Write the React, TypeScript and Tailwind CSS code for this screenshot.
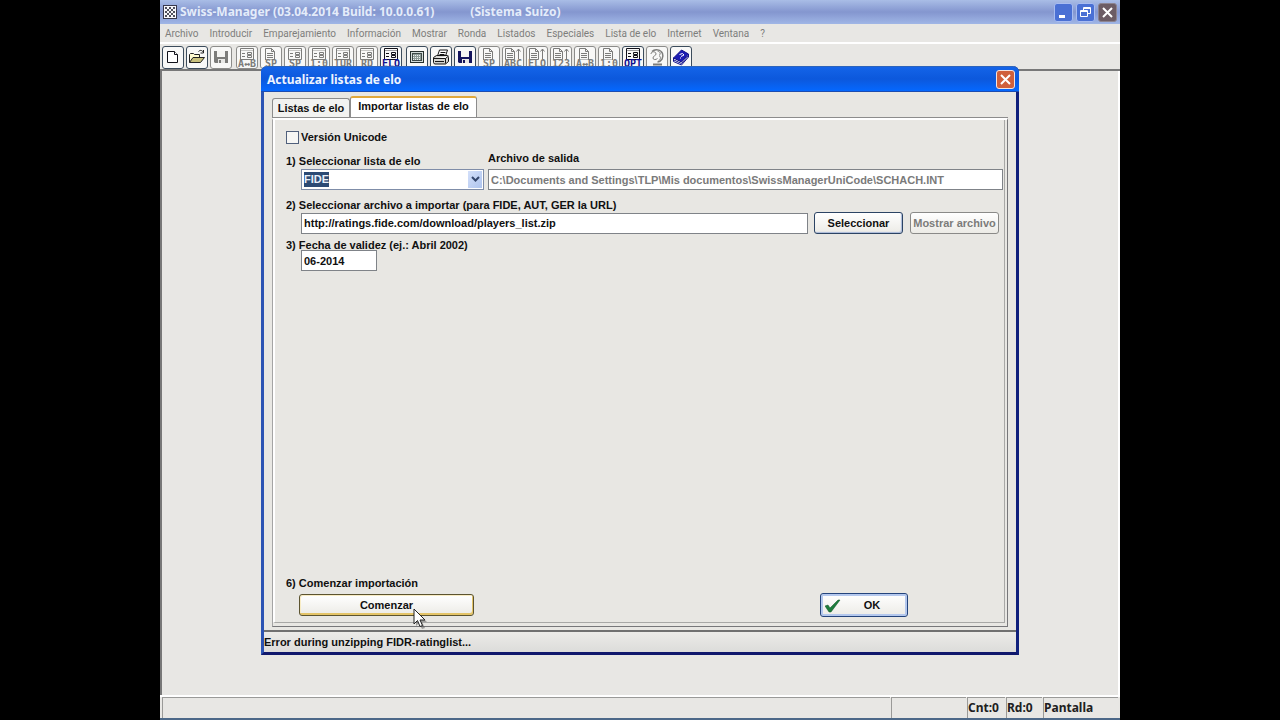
import type { ReactNode } from 'react'

type ToolIcon = 'new' | 'open' | 'save' | 'form' | 'doc' | 'sort' | 'screen' | 'print' | 'world' | 'book'

type Tool = {
  icon: ToolIcon
  name: string
  label?: string
  active?: boolean
}

const menus = [
  'Archivo',
  'Introducir',
  'Emparejamiento',
  'Información',
  'Mostrar',
  'Ronda',
  'Listados',
  'Especiales',
  'Lista de elo',
  'Internet',
  'Ventana',
  '?',
]

const toolGroups: Tool[][] = [
  [
    { icon: 'new', name: 'Nuevo', active: true },
    { icon: 'open', name: 'Abrir', active: true },
    { icon: 'save', name: 'Guardar' },
  ],
  [
    { icon: 'form', name: 'Emparejar', label: 'A↔B' },
    { icon: 'doc', name: 'Nuevo jugador', label: 'SP' },
    { icon: 'form', name: 'Jugadores', label: 'SP' },
    { icon: 'form', name: 'Resultados', label: '1:0' },
    { icon: 'form', name: 'Torneo', label: 'TUR' },
    { icon: 'form', name: 'Rondas', label: 'RD' },
    { icon: 'form', name: 'Elo', label: 'ELO', active: true },
  ],
  [
    { icon: 'screen', name: 'Pantalla', active: true },
    { icon: 'print', name: 'Imprimir', active: true },
    { icon: 'save', name: 'Guardar lista', active: true },
    { icon: 'doc', name: 'Lista de jugadores', label: 'SP' },
    { icon: 'sort', name: 'Orden alfabético', label: 'ABC' },
    { icon: 'sort', name: 'Orden por elo', label: 'ELO' },
    { icon: 'sort', name: 'Clasificación', label: '123' },
    { icon: 'doc', name: 'Lista de emparejamientos', label: 'A↔B' },
    { icon: 'doc', name: 'Lista de resultados', label: '1:0' },
    { icon: 'form', name: 'Opciones', label: 'OPT', active: true },
    { icon: 'world', name: 'Internet' },
    { icon: 'book', name: 'Ayuda', active: true },
  ],
]

const field = 'h-[21px] border border-[#7f8388] bg-white px-[2px] text-[11px] font-bold outline-none'
const xpButton =
  'h-[22px] rounded-[3px] border bg-linear-to-b from-white to-[#ecebe6] text-center font-bold whitespace-nowrap'

function Glyph({ icon }: { icon: ToolIcon }) {
  switch (icon) {
    case 'new':
      return (
        <svg width="18" height="18" viewBox="0 0 18 18" fill="#fff" stroke="currentColor">
          <path d="M3.5 3.5h7l3 3v8h-10z" />
          <path d="M10.5 3.5v3h3" />
        </svg>
      )
    case 'open':
      return (
        <svg width="18" height="18" viewBox="0 0 18 18" fill="none" stroke="#222">
          <path d="M1.5 14.5v-8l1-1h3l1 1h5v3" fill="#fffbd0" />
          <path d="M1.5 14.5l3.5-5h11.500l-4 5z" fill="#c8c07c" />
          <path d="M10.500 3.500c2-2 4-1 5 1M15.500 2v3h-3" />
        </svg>
      )
    case 'save':
      return (
        <svg width="18" height="18" viewBox="0 0 18 18">
          <path d="M2 3h14v12H3l-1-1z" fill="currentColor" />
          <path d="M5 3h8v6H5z" fill="#f4f4f2" />
          <path d="M6 11h7v4H6z" fill="#e8e8e6" />
          <path d="M7 12h2v3H7z" fill="currentColor" />
        </svg>
      )
    case 'form':
      return (
        <svg width="16" height="12" viewBox="0 0 16 12" fill="none" stroke="currentColor">
          <path d="M1.500.500h13v11h-13z" />
          <path d="M2 2.500h12" opacity=".4" />
          <path d="M3 5.500h3M3 8.500h3" />
          <path d="M8.500 4.500h4v2h-4zM8.500 7.500h4v2h-4z" />
        </svg>
      )
    case 'doc':
      return (
        <svg width="16" height="12" viewBox="0 0 16 12" fill="none" stroke="currentColor">
          <path d="M2.500 12V.500h6l3 3V12z" />
          <path d="M8.500.500v3h3M4 5.500h6M4 7.500h6M4 9.500h6" />
        </svg>
      )
    case 'sort':
      return (
        <svg width="16" height="12" viewBox="0 0 16 12" fill="none" stroke="currentColor">
          <path d="M.500 11.500V.500h6l3 3v8z" />
          <path d="M6.500.500v3h3M2 5.500h6M2 7.500h6M2 9.500h6" />
          <path d="M13.500 11V1M11.500 3.500l2-2.500 2 2.500" />
        </svg>
      )
    case 'screen':
      return (
        <svg width="18" height="18" viewBox="0 0 18 18" fill="none" stroke="#26302e">
          <rect x="2.500" y="3.500" width="13" height="11" fill="#d4dcda" />
          <rect x="4.500" y="5.500" width="9" height="7" fill="#8e9c98" stroke="#3e4a48" />
          <path d="M5 7.500h8M5 9.500h8M5 11.500h8" stroke="#eef2f0" strokeDasharray="1 1" />
        </svg>
      )
    case 'print':
      return (
        <svg width="18" height="18" viewBox="0 0 18 18" fill="#fff" stroke="#151515">
          <path d="M5.500 8l2-6h8l-2 6z" />
          <path d="M8.500 4.500h5M7.500 6.500h5" />
          <path d="M1.500 9.500l3-2h11l1 2v4l-3 2.500h-11l-1-1.500z" fill="#d4d4d0" />
          <path d="M1.500 10.500h12l3-2.500M13.500 10.500v5M3 13.500h9" />
        </svg>
      )
    case 'world':
      return (
        <svg width="18" height="18" viewBox="0 0 18 18" fill="none" stroke="currentColor">
          <path d="M4 3.500c3-3 9-2 10.500 2s-1 8-5 8.500" strokeWidth="1.5" />
          <path d="M3 6c0-3 5-3 5 0 0 2-3 1.500-3 4 0 2 3 2 4.500.5M9.500 3c3 1 3.500 3 1.500 4.500 2 1.500 2 3.500-.5 5.500" />
          <path d="M5 16.500h9" strokeWidth="2" />
        </svg>
      )
    case 'book':
      return (
        <svg width="18" height="18" viewBox="0 0 18 18" stroke="#10108c">
          <path d="M1.500 10l8-8 7 4-7 8z" fill="#1c1cb4" />
          <path d="M1.500 10v3.500l8 3.500 7-8V6l-7 8z" fill="#fff" />
          <path d="M2 12l7.500 3.500 7-8" fill="none" />
          <path d="M7.500 6.500l3-1 1.500 1.500-3 1.500M8 10h1" fill="none" stroke="#fff" />
        </svg>
      )
  }
}

function ToolButton({ tool }: { tool: Tool }) {
  const frame = tool.active ? 'border-[#3c4c5c] text-[#101018]' : 'border-[#8c8c8a] text-[#7c7c7a]'
  const saveColor = tool.icon === 'save' && tool.active ? 'text-[#14145c]' : ''
  return (
    <button
      type="button"
      aria-label={tool.name}
      className={`flex h-[23px] w-[22px] flex-col items-center rounded-[3px] border bg-[#f8f8f7] pt-px ${frame}`}
    >
      <span className={`block ${saveColor}`}>
        <Glyph icon={tool.icon} />
      </span>
      {tool.label && (
        <span
          className={`font-['DejaVu_Sans_Mono'] text-[10px] leading-[8px] font-bold ${tool.active ? 'text-[#101090]' : ''}`}
        >
          {tool.label}
        </span>
      )}
    </button>
  )
}

function CaptionButton({ name, tone, children }: { name: string; tone: string; children: ReactNode }) {
  return (
    <button
      type="button"
      aria-label={name}
      className={`flex h-[19px] w-[19px] items-center justify-center rounded-[3px] border ${tone}`}
    >
      <svg width="15" height="15" viewBox="0 0 15 15" fill="none" stroke="#fff">
        {children}
      </svg>
    </button>
  )
}

function TitleBar() {
  return (
    <header className="flex h-6 items-center bg-linear-to-b from-[#a9bde6] via-[#8496cf] to-[#a0b6e6] px-[3px] font-['Noto_Sans'] text-[12px] font-bold text-[#e4ecfa]">
      <svg width="14" height="14" viewBox="0 0 14 14" className="mr-[3px]" fill="none">
        <rect x=".5" y=".5" width="13" height="13" fill="#f8f8fc" stroke="#38384c" />
        <path
          d="M2 3h10M2 7h10M2 11h10"
          stroke="#50505c"
          strokeWidth="2"
          strokeDasharray="2 2"
        />
        <path
          d="M4 5h8M4 9h8"
          stroke="#50505c"
          strokeWidth="2"
          strokeDasharray="2 2"
        />
      </svg>
      <h1>Swiss-Manager (03.04.2014 Build: 10.0.0.61)</h1>
      <span className="ml-9">(Sistema Suizo)</span>
      <div className="ml-auto flex gap-[3px]">
        <CaptionButton name="Minimizar" tone="border-[#a8bcf0] bg-[#4a70d4]">
          <path d="M3 11.500h6" strokeWidth="3" />
        </CaptionButton>
        <CaptionButton name="Restaurar" tone="border-[#a8bcf0] bg-[#4a70d4]">
          <path d="M5.500 5V2.500h7v6H10M5 3.500h7" />
          <path d="M2.500 5.500h7v6h-7zM3 6.500h6" />
        </CaptionButton>
        <CaptionButton name="Cerrar" tone="border-[#8c8490] bg-[#6c5c64]">
          <path d="M3 3l9 9M12 3l-9 9" strokeWidth="2" />
        </CaptionButton>
      </div>
    </header>
  )
}

function ImportPanel() {
  return (
    <form className="flex flex-1 flex-col border-t-2 border-r border-b border-l border-t-white border-r-[#77777a] border-b-[#77777a] border-l-[#a4a4a4] pr-[2px] pb-[3px]">
      <div className="flex flex-1 flex-col border-r border-b border-l-2 border-r-[#a8a8a6] border-b-[#a8a8a6] border-l-white pt-[9px] pr-px pb-[5px] pl-[11px]">
        <label className="flex h-4 items-center gap-[2px]">
          <input
            type="checkbox"
            className="h-[13px] w-[13px] appearance-none border border-[#50607c] bg-[#f6f6f4]"
          />
          Versión Unicode
        </label>

        {/* Rating list and output file */}
        <div className="mt-[5px] flex items-end gap-1">
          <div className="flex w-[198px] flex-col">
            <label htmlFor="list" className="leading-4">
              1) Seleccionar lista de elo
            </label>
            <div className="relative ml-[15px]">
              <select
                id="list"
                className="block h-[21px] w-full appearance-none border border-[#7f8da8] bg-white bg-[linear-gradient(#2c4a74,#2c4a74)] bg-[length:25px_15px] bg-[position:2px_2px] bg-no-repeat px-[2px] text-[11px] font-bold text-[#e8f0fa] outline-none"
              >
                <option>FIDE</option>
              </select>
              <span className="pointer-events-none absolute top-[2px] right-[2px] flex h-[17px] w-[14px] items-center justify-center bg-linear-to-br from-[#d4e0fa] to-[#aec4ee]">
                <svg width="9" height="7" viewBox="0 0 9 7" fill="none" stroke="#34466c" strokeWidth="2">
                  <path d="M1 1l3.500 3.500L8 1" />
                </svg>
              </span>
            </div>
          </div>
          <div className="flex flex-1 flex-col">
            <label htmlFor="output" className="mb-[3px] leading-4">
              Archivo de salida
            </label>
            <input
              id="output"
              readOnly
              defaultValue="C:\Documents and Settings\TLP\Mis documentos\SwissManagerUniCode\SCHACH.INT"
              className={`${field} text-[#7a7a7a]`}
            />
          </div>
        </div>

        {/* Import source */}
        <label htmlFor="source" className="mt-[7px] leading-4">
          2) Seleccionar archivo a importar (para FIDE, AUT, GER la URL)
        </label>
        <div className="-mt-px flex items-center pr-1 pl-[15px]">
          <input
            id="source"
            defaultValue="http://ratings.fide.com/download/players_list.zip"
            className={`${field} min-w-0 flex-1`}
          />
          <button
            type="button"
            className={`${xpButton} ml-[6px] w-[89px] border-[#2c4464] shadow-[inset_-1px_-1px_1px_#a8b8d8]`}
          >
            Seleccionar
          </button>
          <button
            type="button"
            className={`${xpButton} ml-[7px] w-[89px] border-[#8a8a88] text-[#7c7c7a]`}
          >
            Mostrar archivo
          </button>
        </div>

        {/* Validity date */}
        <label htmlFor="date" className="mt-[3px] h-[13px] leading-4">
          3) Fecha de validez (ej.: Abril 2002)
        </label>
        <input id="date" defaultValue="06-2014" className={`${field} ml-[15px] w-[76px]`} />

        <p className="mt-auto leading-4">6) Comenzar importación</p>
        <div className="mt-[2px] flex items-center justify-between pr-[95px] pl-[13px]">
          <button
            type="button"
            className={`${xpButton} w-[175px] border-[#5c5430] shadow-[inset_-1px_-2px_0_#e4c468,inset_1px_1px_0_#f8ecc4]`}
          >
            Comenzar
          </button>
          <button
            type="button"
            className="flex h-6 w-[88px] items-center rounded-[3px] border border-[#24447c] bg-linear-to-b from-white to-[#ecebe6] pl-1 font-bold shadow-[inset_0_0_0_2px_#b4c8ee]"
          >
            <svg width="16" height="15" viewBox="0 0 16 15" fill="#1c7c3c">
              <path d="M0 8l3-1 2 3 8-8h2L6 14H4z" stroke="#0c5424" strokeWidth=".5" />
            </svg>
            <span className="flex-1 pr-1 text-center">OK</span>
          </button>
        </div>
      </div>
    </form>
  )
}

function Dialog() {
  return (
    <section
      role="dialog"
      aria-labelledby="dialog-title"
      className="relative z-10 -mt-[5px] flex w-full max-w-[758px] flex-1 flex-col rounded-t-[6px] border-x-[3px] border-b-[3px] border-r-[#10207c] border-b-[#10186c] border-l-[#2c54b4] bg-[#e8e7e3] font-['Liberation_Sans'] text-[11px] font-bold text-[#101010]"
    >
      <header className="-mx-[3px] flex h-[26px] items-center justify-between rounded-t-[6px] border-t border-b border-t-[#2c64bc] border-b-[#1c4cb0] bg-linear-to-b from-[#1464e8] via-[#0c58dc] to-[#0468ff] pt-px pr-1 pl-[6px] font-['Noto_Sans'] text-[12px] text-[#eef4ff]">
        <h2 id="dialog-title">Actualizar listas de elo</h2>
        <CaptionButton name="Cerrar diálogo" tone="border-[#f4e4e0] bg-[#d0603c]">
          <path d="M3 3l9 9M12 3l-9 9" strokeWidth="2" />
        </CaptionButton>
      </header>

      <div role="tablist" className="mt-1 flex items-end pl-2">
        <button
          type="button"
          role="tab"
          className="h-[19px] w-[78px] rounded-t-[3px] border border-b-0 border-[#8c8c8c] bg-[#f2f2f0]"
        >
          Listas de elo
        </button>
        <button
          type="button"
          role="tab"
          aria-selected="true"
          className="h-[21px] w-[127px] rounded-t-[3px] border-x border-t-2 border-x-[#8c8c8c] border-t-[#e0a83c] bg-white pb-[3px]"
        >
          Importar listas de elo
        </button>
      </div>
      <div className="flex flex-1 flex-col px-2">
        <div className="flex flex-1 flex-col border-t border-[#8c8c8c]">
          <ImportPanel />
        </div>
      </div>

      <footer className="mt-[3px] border-t-2 border-[#707070] bg-linear-to-b from-[#ecebe8] to-[#dcdcda] leading-5">
        Error during unzipping FIDR-ratinglist...
      </footer>

      {/* Pointer */}
      <svg
        width="14"
        height="21"
        viewBox="0 0 14 21"
        className="pointer-events-none absolute bottom-[23px] left-[149px]"
      >
        <path d="M3 3v15l3-3 3 6 3-1-3-6h5z" fill="#555" opacity=".5" />
        <path
          d="M1 1v15l3.500-3.500L7 18.500l2.500-1L7 12h5z"
          fill="#fff"
          stroke="#222"
          strokeWidth="1"
        />
      </svg>
    </section>
  )
}

export default function App() {
  return (
    <div className="flex min-h-screen justify-center bg-black">
      <div className="flex w-full max-w-[960px] flex-col border-b-2 border-[#4c6888] bg-[#e8e7e4]">
        <TitleBar />

        <nav className="flex h-[18px] items-center gap-[11px] pl-[5px] font-['Roboto'] text-[10px] text-[#7e7e7c]">
          {menus.map((menu) => (
            <button key={menu} type="button">
              {menu}
            </button>
          ))}
        </nav>

        <div className="flex h-[29px] gap-1 border-t-2 border-b-2 border-t-white border-b-[#787878] pt-[2px] pl-[2px]">
          {toolGroups.map((group, i) => (
            <div key={i} className="flex gap-[2px]">
              {group.map((tool) => (
                <ToolButton key={tool.name} tool={tool} />
              ))}
            </div>
          ))}
        </div>

        <main className="flex flex-1 flex-col items-center border-x-2 border-r-white border-l-[#787878] pb-10">
          <Dialog />
        </main>

        <footer className="flex h-[23px] gap-px border-t-2 border-white px-[2px] font-['Noto_Sans'] text-[12px] leading-5 font-bold text-[#202020]">
          <div className="flex-1 border-t border-l border-[#9a9a98]" />
          <div className="w-[75px] border-t border-l border-[#9a9a98]" />
          <div className="w-[38px] border-t border-l border-[#9a9a98]">Cnt:0</div>
          <div className="w-[36px] border-t border-l border-[#9a9a98]">Rd:0</div>
          <div className="w-[75px] border-t border-l border-[#9a9a98]">Pantalla</div>
        </footer>
      </div>
    </div>
  )
}
